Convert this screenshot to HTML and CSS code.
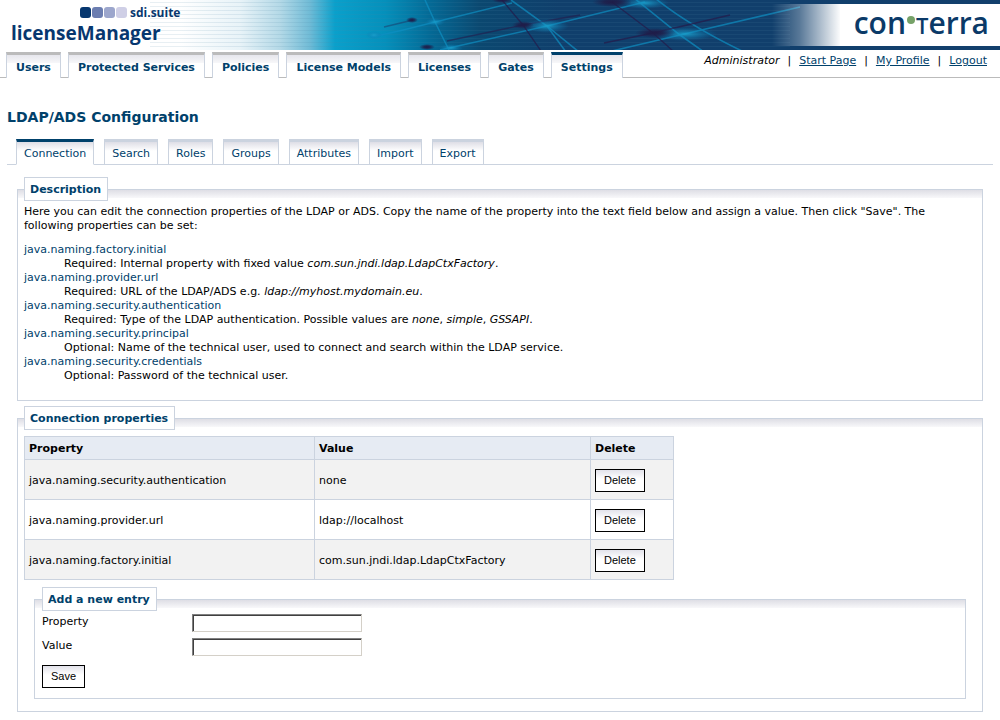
FILE: index.html
```html
<!DOCTYPE html>
<html lang="en">
<head>
<meta charset="utf-8">
<title>licenseManager - LDAP/ADS Configuration</title>
<link rel="stylesheet" href="styles.css">
</head>
<body>
<header class="banner">
  <svg class="banner-art" viewBox="0 0 1000 50" preserveAspectRatio="none" aria-hidden="true">
    <defs>
      <linearGradient id="sky" x1="0" x2="1" y1="0" y2="0">
        <stop offset="0" stop-color="#fff"/>
        <stop offset=".18" stop-color="#fff"/>
        <stop offset=".24" stop-color="#e8f3f8"/>
        <stop offset=".28" stop-color="#b4d9e7"/>
        <stop offset=".31" stop-color="#6fbbd6"/>
        <stop offset=".335" stop-color="#0aa0cb"/>
        <stop offset=".385" stop-color="#0590bb"/>
        <stop offset=".43" stop-color="#046a96"/>
        <stop offset=".48" stop-color="#0b4870"/>
        <stop offset=".56" stop-color="#103f6c"/>
        <stop offset="1" stop-color="#123f6c"/>
      </linearGradient>
      <linearGradient id="fade" x1="0" x2="1" y1="0" y2="0">
        <stop offset="0" stop-color="#fff" stop-opacity="0"/>
        <stop offset=".4" stop-color="#fff" stop-opacity=".3"/>
        <stop offset="1" stop-color="#fff"/>
      </linearGradient>
      <radialGradient id="star">
        <stop offset="0" stop-color="#1aa0cc" stop-opacity=".9"/>
        <stop offset="1" stop-color="#0a78b0" stop-opacity="0"/>
      </radialGradient>
      <radialGradient id="knot">
        <stop offset="0" stop-color="#1f1c48"/>
        <stop offset=".4" stop-color="#1f1c48" stop-opacity=".8"/>
        <stop offset="1" stop-color="#1f1c48" stop-opacity="0"/>
      </radialGradient>
      <pattern id="scan" width="4" height="4" patternUnits="userSpaceOnUse">
        <rect width="4" height="1" y="2" fill="#4a7fa0" opacity=".13"/>
      </pattern>
    </defs>
    <rect width="1000" height="50" fill="url(#sky)"/>
    <rect x="150" width="640" height="50" fill="url(#scan)"/>
    <g fill="none" stroke="#0e8fc2" stroke-width="1.6" opacity=".7">
      <path d="M372 37 Q405 30 435 22 L512 3"/>
      <path d="M425 0 L435 22 L449 50"/>
      <path d="M440 50 L547 26 L645 2"/>
      <path d="M511 0 L547 26 L566 52"/>
      <path d="M547 26 L579 52"/>
      <path d="M634 -2 L680 35 L704 52"/>
      <path d="M656 -1 Q690 26 742 51"/>
      <path d="M612 51 L680 35 L800 7"/>
    </g>
    <g fill="none" stroke="#241c4c" stroke-width="1.3" opacity=".75">
      <path d="M384 27 L413 20" opacity=".5"/>
      <path d="M447 41 L523 25 L580 15" opacity=".8"/>
      <path d="M502 0 L523 25 L541 51"/>
      <path d="M612 2 L653 33 L673 51"/>
      <path d="M604 43 L653 33 L730 15"/>
    </g>
    <ellipse cx="547" cy="26" rx="22" ry="7" fill="url(#star)"/>
    <ellipse cx="435" cy="22" rx="10" ry="4" fill="url(#star)"/>
    <ellipse cx="374" cy="35" rx="8" ry="4" fill="url(#star)"/>
    <ellipse cx="451" cy="48" rx="12" ry="4" fill="url(#star)"/>
    <ellipse cx="685" cy="34" rx="32" ry="7" fill="url(#star)"/>
    <ellipse cx="645" cy="3" rx="24" ry="6" fill="url(#star)"/>
    <ellipse cx="412" cy="20" rx="6" ry="3" fill="url(#knot)"/>
    <ellipse cx="523" cy="25" rx="11" ry="4" fill="url(#knot)"/>
    <ellipse cx="427" cy="47" rx="8" ry="3" fill="url(#knot)"/>
    <ellipse cx="502" cy="0" rx="10" ry="3" fill="url(#knot)"/>
    <ellipse cx="612" cy="2" rx="20" ry="5" fill="url(#knot)"/>
    <ellipse cx="655" cy="33" rx="20" ry="5" fill="url(#knot)"/>
    <rect x="772" y="4" width="69" height="42" fill="url(#fade)"/>
    <rect x="840" y="4" width="160" height="42" fill="#fff"/>
  </svg>
  <div class="product">
    <div class="suite">
      <svg width="47" height="12" viewBox="0 0 47 12" aria-hidden="true">
        <rect width="11" height="11" rx="3" fill="#07376f"/>
        <rect x="12" width="11" height="11" rx="3" fill="#6b7db0"/>
        <rect x="24" width="11" height="11" rx="3" fill="#9ca6cc"/>
        <rect x="36" width="11" height="11" rx="3" fill="#cfcfe6"/>
      </svg>
      <span>sdi.suite</span>
    </div>
    <div class="product-name">licenseManager</div>
  </div>
  <div class="company">con<svg class="company-dot" width="8" height="24" viewBox="0 0 8 24" aria-hidden="true"><circle cx="4" cy="10" r="4" fill="#76a268"/></svg><span class="company-t">t</span>erra</div>
</header>

<div class="main-bar">
  <nav class="main-tabs">
    <a href="#">Users</a>
    <a href="#">Protected Services</a>
    <a href="#">Policies</a>
    <a href="#">License Models</a>
    <a href="#">Licenses</a>
    <a href="#">Gates</a>
    <a href="#" class="current">Settings</a>
  </nav>
  <div class="account">
    <em>Administrator</em><span>|</span><a href="#">Start Page</a><span>|</span><a href="#">My Profile</a><span>|</span><a href="#">Logout</a>
  </div>
</div>

<main class="page">
  <h1>LDAP/ADS Configuration</h1>
  <nav class="sub-tabs">
    <a href="#" class="current">Connection</a>
    <a href="#">Search</a>
    <a href="#">Roles</a>
    <a href="#">Groups</a>
    <a href="#">Attributes</a>
    <a href="#">Import</a>
    <a href="#">Export</a>
  </nav>

  <fieldset class="group description">
    <legend>Description</legend>
    <p>Here you can edit the connection properties of the LDAP or ADS. Copy the name of the property into the text field below and assign a value. Then click "Save". The following properties can be set:</p>
    <dl>
      <dt>java.naming.factory.initial</dt>
      <dd>Required: Internal property with fixed value <em>com.sun.jndi.ldap.LdapCtxFactory</em>.</dd>
      <dt>java.naming.provider.url</dt>
      <dd>Required: URL of the LDAP/ADS e.g. <em>ldap://myhost.mydomain.eu</em>.</dd>
      <dt>java.naming.security.authentication</dt>
      <dd>Required: Type of the LDAP authentication. Possible values are <em>none</em>, <em>simple</em>, <em>GSSAPI</em>.</dd>
      <dt>java.naming.security.principal</dt>
      <dd>Optional: Name of the technical user, used to connect and search within the LDAP service.</dd>
      <dt>java.naming.security.credentials</dt>
      <dd>Optional: Password of the technical user.</dd>
    </dl>
  </fieldset>

  <fieldset class="group">
    <legend>Connection properties</legend>
    <table class="properties">
      <colgroup><col class="col-property"><col class="col-value"><col class="col-delete"></colgroup>
      <thead>
        <tr><th>Property</th><th>Value</th><th>Delete</th></tr>
      </thead>
      <tbody>
        <tr><td>java.naming.security.authentication</td><td>none</td><td><button type="button">Delete</button></td></tr>
        <tr><td>java.naming.provider.url</td><td>ldap://localhost</td><td><button type="button">Delete</button></td></tr>
        <tr><td>java.naming.factory.initial</td><td>com.sun.jndi.ldap.LdapCtxFactory</td><td><button type="button">Delete</button></td></tr>
      </tbody>
    </table>
    <form>
      <fieldset class="group entry">
        <legend>Add a new entry</legend>
        <div class="field"><label for="property">Property</label><input type="text" id="property"></div>
        <div class="field"><label for="value">Value</label><input type="text" id="value"></div>
        <button type="button">Save</button>
      </fieldset>
    </form>
  </fieldset>
</main>
</body>
</html>
```
FILE: styles.css
```css
* {
  box-sizing: border-box;
}

body {
  margin: 0;
  background: #fff;
  color: #000;
  font: 11px/14px "DejaVu Sans", Verdana, sans-serif;
}

a {
  color: #00416b;
}

/* Banner */
.banner {
  position: relative;
  display: flex;
  justify-content: space-between;
  height: 50px;
  color: #07376f;
  font-family: "Open Sans", sans-serif;
}

.banner-art {
  position: absolute;
  inset: 0;
  width: 100%;
  height: 100%;
}

.product,
.company {
  position: relative;
}

.product {
  padding: 5px 0 0 11px;
  font-weight: 700;
}

.suite {
  display: flex;
  align-items: center;
  gap: 3px;
  padding-left: 69px;
  font-size: 12px;
  line-height: 16px;
}

.product-name {
  font-size: 19px;
  line-height: 24px;
}

.company {
  padding-right: 11px;
  color: #0b3a68;
  font-size: 30px;
  font-weight: 600;
  line-height: 44px;
}

.company-dot {
  margin: 0 1px;
}

.company-t {
  font-size: 32px;
  font-variant: small-caps;
}

/* Main navigation */
.main-bar {
  display: flex;
  justify-content: space-between;
  padding-top: 2px;
  background: linear-gradient(#bbb, #bbb) 0 100% / 100% 1px no-repeat;
}

.main-tabs {
  display: flex;
  gap: 7px;
  padding-left: 6px;
}

.main-tabs a {
  padding: 6px 9px 3px;
  border: 1px solid #cbd3df;
  border-width: 3px 1px 0;
  border-top-color: #bbb;
  background: #fff linear-gradient(#e6e6ec, #f7f7f9) 0 0 / 100% 8px no-repeat;
  font-weight: 700;
  text-decoration: none;
}

.main-tabs .current {
  border-top-color: #00416b;
}

.account {
  display: flex;
  gap: 8px;
  padding: 2px 13px 0 0;
}

/* Page */
.page {
  padding: 30px 7px 8px;
}

h1 {
  margin: 0 0 13px;
  color: #00416b;
  font-size: 14px;
  font-weight: 700;
  line-height: 18px;
}

.sub-tabs {
  display: flex;
  gap: 10px;
  padding-left: 9px;
  background: linear-gradient(#cbd3df, #cbd3df) 0 100% / 100% 1px no-repeat;
}

.sub-tabs a {
  padding: 5px 7px 3px;
  border: 1px solid #cbd3df;
  border-width: 3px 1px 1px;
  background: #fff linear-gradient(#dedee6, #fff) 0 0 / 100% 9px no-repeat;
  text-decoration: none;
}

.sub-tabs .current {
  border-top-color: #00416b;
  border-bottom-color: #fff;
}

.group {
  min-width: 0;
  margin: 12px 10px 0;
  padding: 3px 6px 12px;
  border: 1px solid #cbd3df;
  background: linear-gradient(#dedee5, #f8f8fa) 0 0 / 100% 8px no-repeat;
}

.group + .group {
  margin-top: 5px;
}

.group legend {
  padding: 5px 6px 3px 5px;
  border: 1px solid #cbd3df;
  background: #fff;
  color: #00416b;
  font-weight: 700;
}

.group.description {
  padding-top: 4px;
  padding-bottom: 17px;
}

p {
  margin: 0 0 10px;
}

dl,
dd {
  margin: 0;
}

dt {
  color: #00416b;
}

dd {
  padding-left: 40px;
}

/* Properties table */
.properties {
  width: 650px;
  margin-top: 3px;
  border-collapse: collapse;
  table-layout: fixed;
}

.col-property {
  width: 290px;
}

.col-value {
  width: 276px;
}

.properties th,
.properties td {
  padding: 5px 4px 3px;
  border: 1px solid #cbd3df;
  text-align: left;
}

.properties th {
  background: #e6ebf3;
}

.properties td {
  height: 40px;
}

.properties tbody tr:nth-child(odd) {
  background: #f2f2f2;
}

button {
  display: block;
  height: 23px;
  padding: 0 8px 1px;
  border: 1px solid #000;
  border-radius: 0;
  background: #fff linear-gradient(#e2e2ea, #fff) 0 0 / 100% 9px no-repeat;
  color: #000;
  font: 11px/14px "Liberation Sans", Arial, sans-serif;
}

.group.entry {
  margin-top: 7px;
  padding: 3px 7px 10px;
}

.field {
  display: flex;
  align-items: flex-start;
  height: 24px;
}

.field label {
  width: 150px;
  padding-top: 1px;
}

.field input {
  width: 170px;
  height: 18px;
  padding: 0 2px;
  border: 1px solid;
  border-color: #808080 #d4d0c8 #d4d0c8 #808080;
  background: #fff;
  box-shadow: inset 1px 1px #404040;
  font: inherit;
}

.entry button {
  margin-top: 3px;
}
```
